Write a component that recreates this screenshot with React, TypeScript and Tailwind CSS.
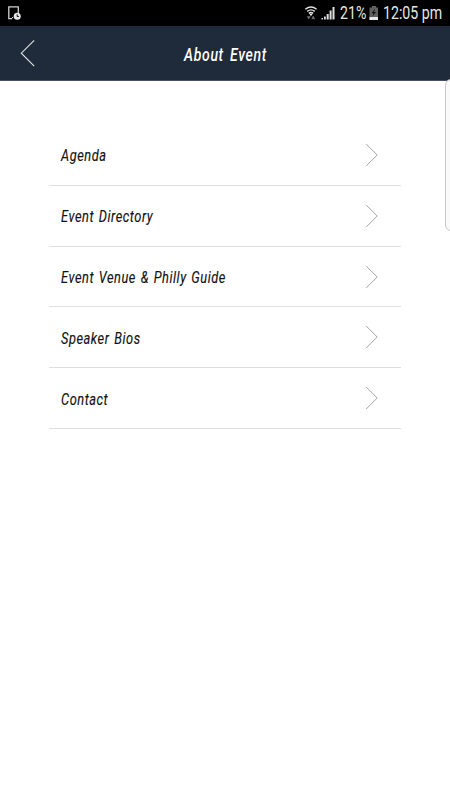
const items = [
  { id: "agenda", label: "Agenda" },
  { id: "directory", label: "Event Directory" },
  { id: "venue", label: "Event Venue & Philly Guide" },
  { id: "speakers", label: "Speaker Bios" },
  { id: "contact", label: "Contact" },
];

function StatusBar() {
  return (
    <div className="flex h-[26px] items-center bg-black pl-2 text-[17.5px] leading-[20px] text-[#e6e6e6]">
      <svg width="14" height="15" viewBox="0 0 14 15" fill="none">
        <path d="M4.2 12.6H.8V.9h9.5v6" stroke="#d4d4d4" strokeWidth="1.3" />
        <path d="M4 11.5h1" stroke="#d4d4d4" />
        <circle cx="9.2" cy="10.3" r="3.5" fill="#e8e8e8" />
        <path d="M9.2 8.4v2.1h1.6" stroke="#000" />
      </svg>

      <svg className="ml-[283px]" width="13" height="14" viewBox="0 0 13 14" fill="none">
        <path d="M.4 3.2Q6-1.3 11.6 3.2M2.2 5.4Q6 2.3 9.8 5.4M3.8 7.4Q6 5.5 8.2 7.4" stroke="#e0e0e0" strokeWidth="1.4" />
        <path d="M6 7.3l1.5 1.2L6 9.9 4.5 8.5z" fill="#e0e0e0" />
        <path d="M2.3 10.5h3L3.8 13zM6.7 12.8h3L8.2 10z" fill="#777" stroke="#777" strokeWidth=".5" />
      </svg>
      <svg className="ml-[3px]" width="15" height="14" viewBox="0 0 15 14" fill="#e0e0e0">
        <path d="M.5 12h1.5v1.5H.5zM3 10.5h1.8v3H3zM5.7 8h2v5.5h-2zM8.6 4.5h2v9h-2zM11.5 1h2v12.5h-2z" />
      </svg>
      <span className="ml-[4px] w-[27px] origin-left scale-x-[.81] whitespace-nowrap">21%</span>
      <svg className="ml-[2px]" width="10" height="14" viewBox="0 0 10 14">
        <path d="M3 0h4v1.5h2V14H.5V1.5H3z" fill="#606060" />
        <path d="M.5 11h8.5v3H.5z" fill="#e8e8e8" />
        <path d="M6 2.8L2.5 7.3h2L3.6 10.3 7.1 6h-2z" fill="#111" />
      </svg>
      <span className="ml-[4px] w-[59px] origin-left scale-x-[.81] whitespace-nowrap">12:05 pm</span>
    </div>
  );
}

function Header() {
  return (
    <header className="flex h-[55px] items-center border-b border-[#44505f] bg-[#1f2b3a] pl-5">
      <svg width="16" height="28" viewBox="0 0 16 28" fill="none">
        <path d="M14.2 1.3L1.3 14.2L14.2 27.1" stroke="#dfe2e6" strokeWidth="1.1" />
      </svg>
      <h1 className="ml-[148px] mt-[3px] w-[84px] origin-left scale-x-[.8] whitespace-nowrap text-[17.5px] font-medium italic leading-6 tracking-[.85px] text-white [word-spacing:2.5px]">
        About Event
      </h1>
    </header>
  );
}

function MenuRow({ label }: { label: string }) {
  return (
    <li className="flex h-[60.85px] items-center justify-between border-b border-[#dfdfdf] pl-3 pr-[22px]">
      <span className="mt-[3px] origin-left scale-x-[.8] whitespace-nowrap text-[16px] italic leading-5 tracking-[.68px] text-[#111] [-webkit-text-stroke:0.15px_#111] [word-spacing:1.3px]">
        {label}
      </span>
      <svg width="14" height="24" viewBox="0 0 14 24" fill="none">
        <path d="M1.2 1L12.2 12L1.2 23" stroke="#999" strokeWidth=".9" />
      </svg>
    </li>
  );
}

export default function App() {
  return (
    <div className="relative h-[800px] w-[450px] overflow-hidden bg-white font-['Roboto',sans-serif]">
      <StatusBar />
      <Header />
      <ul className="ml-[49px] mt-[43.9px] w-[352px]">
        {items.map((item) => (
          <MenuRow key={item.id} label={item.label} />
        ))}
      </ul>
      {/* edge panel handle, hangs off the right side of the screen */}
      <div className="absolute left-[445px] top-[79px] h-[152px] w-[12px] rounded-[6px] border border-[#c8c8c8] bg-[#fafafa]" />
    </div>
  );
}
